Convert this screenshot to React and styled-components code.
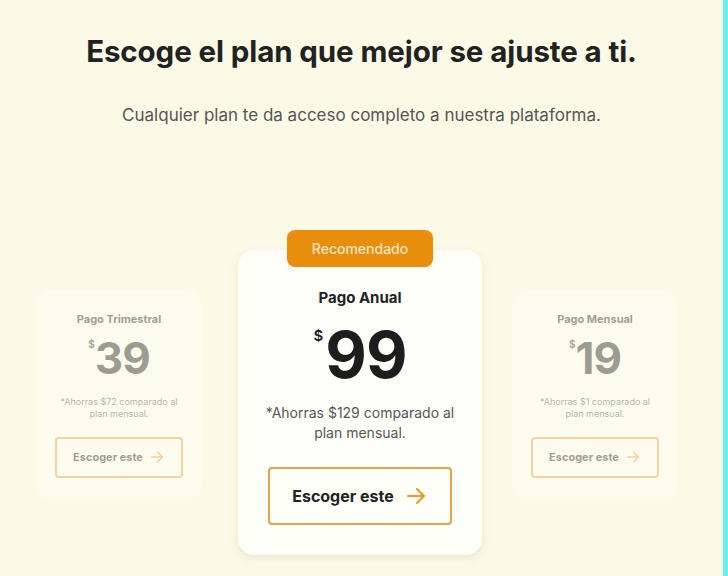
import React from 'react'
import styled, { createGlobalStyle, css } from 'styled-components'

const GlobalStyle = createGlobalStyle`
  html, body {
    margin: 0;
    padding: 0;
  }
  body {
    background: #fbfae6;
    font-family: Inter, "DejaVu Sans", sans-serif;
    color: #222;
  }
`

const Page = styled.div`
  box-sizing: border-box;
  width: 728px;
  height: 576px;
  overflow: hidden;
  border-right: 5px solid #6cf0e6;
  padding-top: 33px;
  text-align: center;
`

const Title = styled.h1`
  margin: 0;
  font-size: 29.5px;
  line-height: 36px;
  font-weight: 700;
  letter-spacing: -0.1px;
  color: #222;
`

const Subtitle = styled.p`
  margin: 35px 0 0;
  font-size: 17px;
  line-height: 22px;
  color: #555;
`

const Plans = styled.div`
  display: flex;
  align-items: center;
  margin-top: 124px;
  padding-left: 36px;
`

const Card = styled.div`
  position: relative;
  box-sizing: border-box;
  display: flex;
  flex-direction: column;
  align-items: center;
  flex-shrink: 0;
  background: #fffffa;
  border-radius: 16px;
  ${p =>
    p.$featured
      ? css`
          width: 244px;
          height: 305px;
          margin: 0 30px 0 36px;
          padding-top: 38px;
          box-shadow: 0 3px 8px rgba(120, 110, 60, 0.14);
        `
      : css`
          width: 166px;
          height: 210px;
          padding-top: 22px;
          opacity: 0.42;
          margin-top: -16px;
        `}
`

const Badge = styled.div`
  position: absolute;
  top: -20px;
  left: 50%;
  transform: translateX(-50%);
  width: 146px;
  height: 37px;
  border-radius: 8px;
  background: #e98d0c;
  color: #fbe7c2;
  font-size: 14px;
  font-weight: 500;
  line-height: 37px;
`

const PlanName = styled.div`
  font-weight: 700;
  color: #222;
  font-size: ${p => (p.$featured ? '15px' : '11px')};
  line-height: ${p => (p.$featured ? '20px' : '14px')};
`

const Price = styled.div`
  display: flex;
  align-items: flex-start;
  justify-content: center;
  font-weight: 700;
  color: #1d1d1d;
  letter-spacing: -1px;
  font-size: ${p => (p.$featured ? '64px' : '44px')};
  line-height: 1;
  margin-top: ${p => (p.$featured ? '15px' : '10px')};
`

const Dollar = styled.span`
  font-size: ${p => (p.$featured ? '15px' : '10px')};
  line-height: 1;
  margin-top: ${p => (p.$featured ? '5px' : '3px')};
  margin-right: ${p => (p.$featured ? '3px' : '1px')};
  font-weight: 600;
`

const Savings = styled.p`
  margin: 0;
  color: #555;
  font-size: ${p => (p.$featured ? '14px' : '9px')};
  line-height: ${p => (p.$featured ? '20px' : '12px')};
  margin-top: ${p => (p.$featured ? '16px' : '16px')};
  padding: 0 20px;
`

const ChooseButton = styled.button`
  box-sizing: border-box;
  display: flex;
  align-items: center;
  justify-content: center;
  background: transparent;
  border: 2px solid #e8a04a;
  border-radius: 4px;
  font-family: inherit;
  font-weight: 700;
  color: #222;
  cursor: pointer;
  ${p =>
    p.$featured
      ? css`
          width: 184px;
          height: 58px;
          margin-top: 24px;
          font-size: 16px;
          gap: 10px;
        `
      : css`
          width: 128px;
          height: 41px;
          margin-top: 17px;
          font-size: 11px;
          gap: 6px;
        `}
`

const Arrow = ({ size }) => (
  <svg width={size} height={size} viewBox="0 0 24 24" fill="none" stroke="#ee9a2a" strokeWidth="2.2" strokeLinecap="round" strokeLinejoin="round">
    <path d="M4 12h16" />
    <path d="M13 5l7 7-7 7" />
  </svg>
)

const plans = [
  { name: 'Pago Trimestral', price: '39', savings: '*Ahorras $72 comparado al plan mensual.' },
  { name: 'Pago Anual', price: '99', savings: '*Ahorras $129 comparado al plan mensual.', featured: true },
  { name: 'Pago Mensual', price: '19', savings: '*Ahorras $1 comparado al plan mensual.' },
]

export default function App() {
  return (
    <>
      <GlobalStyle />
      <Page>
        <Title>Escoge el plan que mejor se ajuste a ti.</Title>
        <Subtitle>Cualquier plan te da acceso completo a nuestra plataforma.</Subtitle>
        <Plans>
          {plans.map(plan => (
            <Card key={plan.name} $featured={plan.featured}>
              {plan.featured && <Badge>Recomendado</Badge>}
              <PlanName $featured={plan.featured}>{plan.name}</PlanName>
              <Price $featured={plan.featured}>
                <Dollar $featured={plan.featured}>$</Dollar>
                {plan.price}
              </Price>
              <Savings $featured={plan.featured}>{plan.savings}</Savings>
              <ChooseButton $featured={plan.featured}>
                Escoger este
                <Arrow size={plan.featured ? 24 : 16} />
              </ChooseButton>
            </Card>
          ))}
        </Plans>
      </Page>
    </>
  )
}
